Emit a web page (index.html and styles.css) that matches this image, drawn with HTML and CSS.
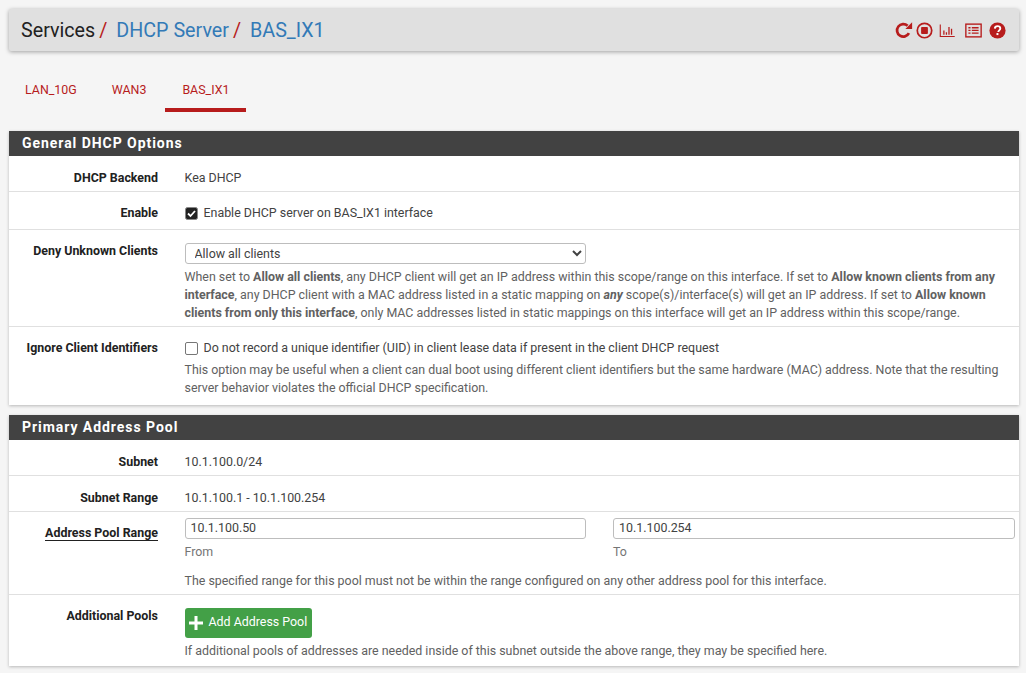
FILE: index.html
```html
<!DOCTYPE html>
<html lang="en">
<head>
<meta charset="utf-8">
<title>Services / DHCP Server / BAS_IX1</title>
<link rel="stylesheet" href="styles.css">
</head>
<body>
<header class="crumbbar">
  <h1 class="crumbs"><span>Services</span><i class="sep">/</i><a>DHCP Server</a><i class="sep">/</i><a>BAS_IX1</a></h1>
  <div class="actions">
    <svg class="ic ic-reload" viewBox="0 0 20 20"><path d="M15.5 13.6A7 7 0 1 1 14 5.2" fill="none" stroke="#b71c1c" stroke-width="3"/><path d="M19 1.500V9h-7.500z" fill="#b71c1c"/></svg>
    <svg class="ic ic-stop" viewBox="0 0 20 20"><circle cx="10" cy="10" r="8.500" fill="none" stroke="#b71c1c" stroke-width="2"/><rect x="6" y="6" width="8" height="8" rx="1" fill="#b71c1c"/></svg>
    <svg class="ic ic-chart" viewBox="0 0 20 20"><path d="M1.500 3v14h17" fill="none" stroke="#b71c1c" stroke-width="1.300"/><path d="M5 10h1.500v5H5zM8 12h1.500v3H8zM11 6h1.500v9H11zM14 8h1.500v7H14z" fill="#b71c1c"/></svg>
    <svg class="ic ic-list" viewBox="0 0 20 20"><rect x="1" y="2.500" width="18" height="15" fill="none" stroke="#b71c1c" stroke-width="1.600"/><path d="M4 6h2.500v1.500H4zM8 6h8v1.500H8zM4 9.200h2.500v1.500H4zM8 9.200h8v1.500H8zM4 12.400h2.500v1.500H4zM8 12.400h8v1.500H8z" fill="#b71c1c"/></svg>
    <svg class="ic ic-help" viewBox="0 0 20 20"><circle cx="10" cy="10" r="9.500" fill="#b71c1c"/><path d="M6.800 7.700C7 5.800 8.300 4.800 10.100 4.800c1.900 0 3.200 1.100 3.200 2.800 0 2.200-2.400 2.300-2.400 4.200" fill="none" stroke="#fff" stroke-width="2.200"/><rect x="8.800" y="13" width="2.300" height="2.400" fill="#fff"/></svg>
  </div>
</header>

<nav class="tabs">
  <a class="tab">LAN_10G</a>
  <a class="tab">WAN3</a>
  <a class="tab active">BAS_IX1</a>
</nav>

<section class="panel">
  <h2 class="panel-head">General DHCP Options</h2>
  <div class="row row-plain">
    <div class="label">DHCP Backend</div>
    <div class="value">Kea DHCP</div>
  </div>
  <div class="row row-enable">
    <div class="label">Enable</div>
    <div class="value"><label class="check"><svg class="cb" viewBox="0 0 13 13"><rect x=".5" y=".5" width="12" height="12" rx="2" fill="#222" stroke="#888"/><path d="M3 6.500l2.500 2.500L10 4" fill="none" stroke="#fff" stroke-width="1.800"/></svg>Enable DHCP server on BAS_IX1 interface</label></div>
  </div>
  <div class="row row-deny">
    <div class="label">Deny Unknown Clients</div>
    <div class="value">
      <select class="select"><option>Allow all clients</option></select>
      <p class="help">When set to <b>Allow all clients</b>, any DHCP client will get an IP address within this scope/range on this interface. If set to <b>Allow known clients from any interface</b>, any DHCP client with a MAC address listed in a static mapping on <b><em>any</em></b> scope(s)/interface(s) will get an IP address. If set to <b>Allow known clients from only this interface</b>, only MAC addresses listed in static mappings on this interface will get an IP address within this scope/range.</p>
    </div>
  </div>
  <div class="row row-ignore">
    <div class="label">Ignore Client Identifiers</div>
    <div class="value">
      <label class="check"><span class="cb cb-off"></span>Do not record a unique identifier (UID) in client lease data if present in the client DHCP request</label>
      <p class="help">This option may be useful when a client can dual boot using different client identifiers but the same hardware (MAC) address. Note that the resulting server behavior violates the official DHCP specification.</p>
    </div>
  </div>
</section>

<section class="panel">
  <h2 class="panel-head">Primary Address Pool</h2>
  <div class="row row-plain">
    <div class="label">Subnet</div>
    <div class="value">10.1.100.0/24</div>
  </div>
  <div class="row row-plain">
    <div class="label">Subnet Range</div>
    <div class="value">10.1.100.1 - 10.1.100.254</div>
  </div>
  <div class="row row-range">
    <div class="label"><span class="req">Address Pool Range</span></div>
    <div class="value">
      <div class="pair">
        <div><input class="input" value="10.1.100.50"><div class="sub">From</div></div>
        <div><input class="input" value="10.1.100.254"><div class="sub">To</div></div>
      </div>
      <p class="help help-range">The specified range for this pool must not be within the range configured on any other address pool for this interface.</p>
    </div>
  </div>
  <div class="row row-add">
    <div class="label">Additional Pools</div>
    <div class="value">
      <a class="btn"><svg class="plus" viewBox="0 0 14 14"><path d="M5.500 0h3v5.500H14v3H8.500V14h-3V8.500H0v-3h5.500z" fill="#fff"/></svg>Add Address Pool</a>
      <p class="help help-add">If additional pools of addresses are needed inside of this subnet outside the above range, they may be specified here.</p>
    </div>
  </div>
</section>
</body>
</html>
```
FILE: styles.css
```css
* { box-sizing: border-box; }
html, body { height: 100%; }
body {
  margin: 0;
  padding: 9px 7px 0 9px;
  background: #f5f5f5;
  font-family: Roboto, "Liberation Sans", sans-serif;
  font-size: 12.420px;
  line-height: 18px;
  color: #212121;
  overflow: hidden;
}
.crumbbar {
  height: 42px;
  background: #e0e0e0;
  border-radius: 2px;
  box-shadow: 0 1px 4px rgba(0,0,0,.35);
  display: flex;
  align-items: center;
  justify-content: space-between;
  padding: 0 13px 0 12px;
}
.crumbs { margin: 2px 0 0; font-size: 19.700px; font-weight: 400; line-height: 24px; color: #212121; display: flex; }
.crumbs a { color: #337ab7; }
.sep { font-style: normal; color: #b71c1c; margin: 0 9px 0 4px; }
.actions { display: flex; align-items: center; }
.ic { width: 17px; height: 17px; display: block; }
.ic-reload { width: 18px; height: 18px; }
.ic-stop { margin-left: 3px; }
.ic-chart { margin-left: 6px; }
.ic-list { margin-left: 9px; }
.ic-help { margin-left: 7px; }
.tabs { display: flex; height: 61px; }
.tab {
  height: 61px;
  padding: 30px 16px 0;
  color: #b71c1c;
  line-height: 18px;
}
.tab.active { border-bottom: 4px solid #b71c1c; width: 81px; text-align: center; padding-left: 0; padding-right: 0; margin-left: 3px; }
.tab:first-child { padding-right: 19px; }
.panel {
  background: #fff;
  margin-top: 19px;
  box-shadow: 0 1px 3px rgba(0,0,0,.25);
}
.panel + .panel { margin-top: 10px; }
.panel-head {
  margin: 0;
  height: 25px;
  background: #424242;
  color: #fff;
  font-size: 14px;
  font-weight: 700;
  letter-spacing: .95px;
  line-height: 25px;
  padding-left: 13px;
}
.row { display: flex; border-bottom: 1px solid #e0e0e0; }
.row:last-child { border-bottom: 0; }
.label { width: 149px; flex: none; text-align: right; font-weight: 700; }
.value { flex: 1; margin-left: 26.500px; padding-right: 4px; color: #424242; min-width: 0; }
.row-plain { height: 36px; padding-top: 13px; }
.row-enable { height: 38px; padding-top: 12px; }
.row-deny { height: 97px; padding-top: 11px; }
.row-deny .label { padding-top: 1px; }
.row-ignore { height: 78px; padding-top: 12px; }
.row-ignore .label { padding-top: 0; }
.row-range { height: 83px; padding-top: 6px; }
.row-range .label { padding-top: 6px; }
.row-add { height: 71px; padding-top: 11px; }
.row-add .label { padding-top: 1px; }
.check { display: flex; align-items: center; height: 18px; }
.cb { width: 13px; height: 13px; margin: 0 5.500px 0 .5px; flex: none; display: block; }
.cb-off { border: 1px solid #767676; border-radius: 2px; background: #fff; }
.select {
  display: block;
  width: 401.500px;
  height: 21px;
  margin-top: 2px;
  padding: 0 0 0 5px;
  font: 12.420px Roboto, sans-serif;
  color: #424242;
  background: #fff;
  border: 1px solid #bdbdbd;
  border-radius: 3px;
}
.help { margin: 4px 0 0; color: #616161; line-height: 18px; width: 826px; }
.req { border-bottom: 1px solid #212121; }
.pair { display: flex; gap: 27px; }
.pair > div { width: 401.500px; }
.pair > div:last-child { width: 402px; }
.input {
  display: block;
  width: 100%;
  height: 21px;
  padding: 0 5px 2px;
  font: 12.420px Roboto, sans-serif;
  color: #424242;
  background: #fff;
  border: 1px solid #bdbdbd;
  border-radius: 3px;
}
.sub { color: #757575; margin-top: 4px; line-height: 18px; }
.help-range { margin-top: 11px; }
.btn {
  display: inline-flex;
  align-items: center;
  width: 127px;
  height: 30px;
  padding: 0 0 2px 4px;
  background: #43a047;
  color: #fff;
  border-radius: 3px;
  margin-top: 2px;
}
.plus { width: 14px; height: 14px; margin: 2px 6px 0 0; }
.help-add { margin-top: 4px; }
```
